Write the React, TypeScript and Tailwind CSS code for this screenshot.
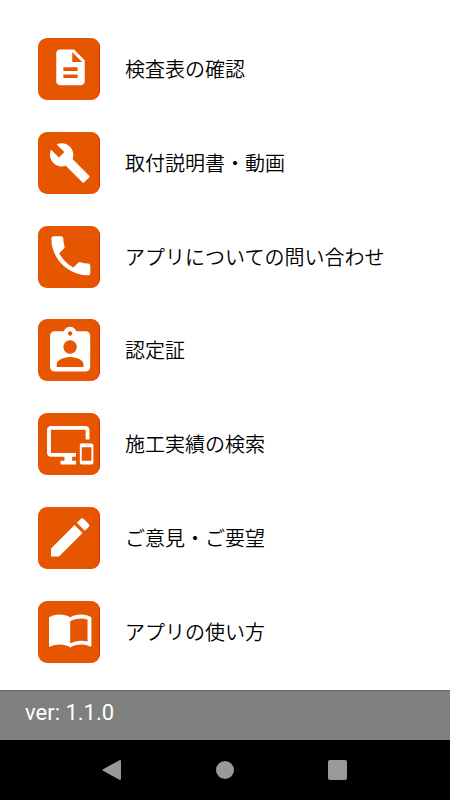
type MenuItem = {
  label: string;
  path: string;
  // places the 24-unit glyph inside the 62-unit tile
  transform: string;
};

const menuItems: MenuItem[] = [
  {
    label: "検査表の確認",
    transform: "translate(11.3 7.6) scale(1.81)",
    path: "M14 2H6c-1.1 0-1.99.9-1.99 2L4 20c0 1.1.89 2 1.99 2H18c1.1 0 2-.9 2-2V8l-6-6zm2 16H8v-2h8v2zm0-4H8v-2h8v2zm-3-5V3.5L18.5 9H13z",
  },
  {
    label: "取付説明書・動画",
    transform: "translate(10.4 9) scale(1.82)",
    path: "M22.7 19l-9.1-9.1c.9-2.3.4-5-1.5-6.9-2-2-5-2.4-7.4-1.3L9 6 6 9 1.6 4.7C.4 7.1.9 10.1 2.9 12.1c1.9 1.9 4.6 2.4 6.9 1.5l9.1 9.1c.4.4 1 .4 1.4 0l2.3-2.3c.5-.4.5-1.1.1-1.4z",
  },
  {
    label: "アプリについての問い合わせ",
    transform: "translate(7 3.4) scale(2.2)",
    path: "M6.62 10.79c1.44 2.83 3.76 5.14 6.59 6.59l2.2-2.2c.27-.27.67-.36 1.02-.24 1.12.37 2.33.57 3.57.57.55 0 1 .45 1 1V20c0 .55-.45 1-1 1-9.39 0-17-7.61-17-17 0-.55.45-1 1-1h3.5c.55 0 1 .45 1 1 0 1.25.2 2.45.57 3.57.11.35.03.74-.25 1.02l-2.2 2.2z",
  },
  {
    label: "認定証",
    transform: "translate(5.4 5.2) scale(2.27)",
    path: "M19 3h-4.18C14.4 1.84 13.3 1 12 1c-1.3 0-2.4.84-2.82 2H5c-1.1 0-2 .9-2 2v14c0 1.1.9 2 2 2h14c1.1 0 2-.9 2-2V5c0-1.1-.9-2-2-2zm-7 0c.55 0 1 .45 1 1s-.45 1-1 1-1-.45-1-1 .45-1 1-1zm0 4c1.66 0 3 1.34 3 3s-1.34 3-3 3-3-1.34-3-3 1.34-3 3-3zm6 12H6v-1.4c0-2 4-3.1 6-3.1s6 1.1 6 3.1V19z",
  },
  {
    label: "施工実績の検索",
    transform: "translate(9.2 8.800) scale(1.96)",
    path: "M23 11.01L18 11c-.55 0-1 .45-1 1v9c0 .55.45 1 1 1h5c.55 0 1-.45 1-1v-9c0-.55-.45-.99-1-.99zM23 20h-5v-7h5v7zM20 2H2C.89 2 0 2.89 0 4v12c0 1.1.89 2 2 2h7v2H7v2h8v-2h-2v-2h2v-2H2V4h18v5h2V4c0-1.11-.9-2-2-2z",
  },
  {
    label: "ご意見・ご要望",
    transform: "translate(6.8 4.5) scale(2.16)",
    path: "M3 17.25V21h3.75L17.81 9.94l-3.75-3.75L3 17.25zM20.71 7.04c.39-.39.39-1.02 0-1.41l-2.34-2.34c-.39-.39-1.02-.39-1.41 0l-1.83 1.83 3.75 3.75 1.83-1.83z",
  },
  {
    label: "アプリの使い方",
    transform: "translate(9.2 4.5) scale(1.96)",
    path: "M21 5c-1.11-.35-2.33-.5-3.5-.5-1.95 0-4.05.4-5.5 1.5-1.45-1.1-3.55-1.5-5.5-1.5S2.45 4.9 1 6v14.65c0 .25.25.5.5.5.1 0 .15-.05.25-.05C3.1 20.45 5.05 20 6.5 20c1.95 0 4.05.4 5.5 1.5 1.35-.85 3.8-1.5 5.5-1.5 1.65 0 3.35.3 4.75 1.05.1.05.15.05.25.05.25 0 .5-.25.5-.5V6c-.6-.45-1.25-.75-2-1zm0 13.5c-1.1-.35-2.3-.5-3.5-.5-1.7 0-4.15.65-5.5 1.5V8c1.35-.85 3.8-1.5 5.5-1.5 1.2 0 2.4.15 3.5.5v11.5z",
  },
];

function MenuRow({ item }: { item: MenuItem }) {
  return (
    <li>
      <button type="button" className="flex w-full items-center gap-[25px] text-left">
        <svg
          viewBox="0 0 62 62"
          aria-hidden="true"
          className="size-[62px] shrink-0 rounded-[9px] border-r border-[#dc2808] bg-[#e65500] fill-white"
        >
          <path d={item.path} transform={item.transform} />
        </svg>
        <span className="text-xl font-[350] text-black">{item.label}</span>
      </button>
    </li>
  );
}

function NavBar() {
  return (
    <nav className="flex h-15 items-center bg-black px-14">
      <button type="button" aria-label="戻る" className="flex flex-1 justify-center">
        <svg viewBox="0 0 20 20" className="size-5 fill-[#999]">
          <path d="M17.5.2 1 9.2q-1.2.8 0 1.6l16.5 9q1.5.5 1.5-1V1.2q0-1.5-1.5-1z" />
        </svg>
      </button>
      <button type="button" aria-label="ホーム" className="flex flex-1 justify-center">
        <span className="size-[18px] rounded-full bg-[#999]" />
      </button>
      <button type="button" aria-label="アプリ履歴" className="flex flex-1 justify-center">
        <span className="h-5 w-[19px] rounded-xs bg-[#999]" />
      </button>
    </nav>
  );
}

export default function App() {
  return (
    <div className="flex min-h-screen flex-col bg-white font-['Noto_Sans_CJK_JP',sans-serif]">
      <main className="flex flex-1 flex-col px-[38px] pt-[38px] pb-[27px]">
        <ul className="flex flex-1 flex-col justify-between">
          {menuItems.map((item) => (
            <MenuRow key={item.label} item={item} />
          ))}
        </ul>
      </main>
      <footer className="h-[50px] border-t border-[#666] bg-[#808080] px-[25px] pt-2 font-[Roboto,sans-serif] text-[22px] leading-7 text-white">
        ver: 1.1.0
      </footer>
      <NavBar />
    </div>
  );
}
